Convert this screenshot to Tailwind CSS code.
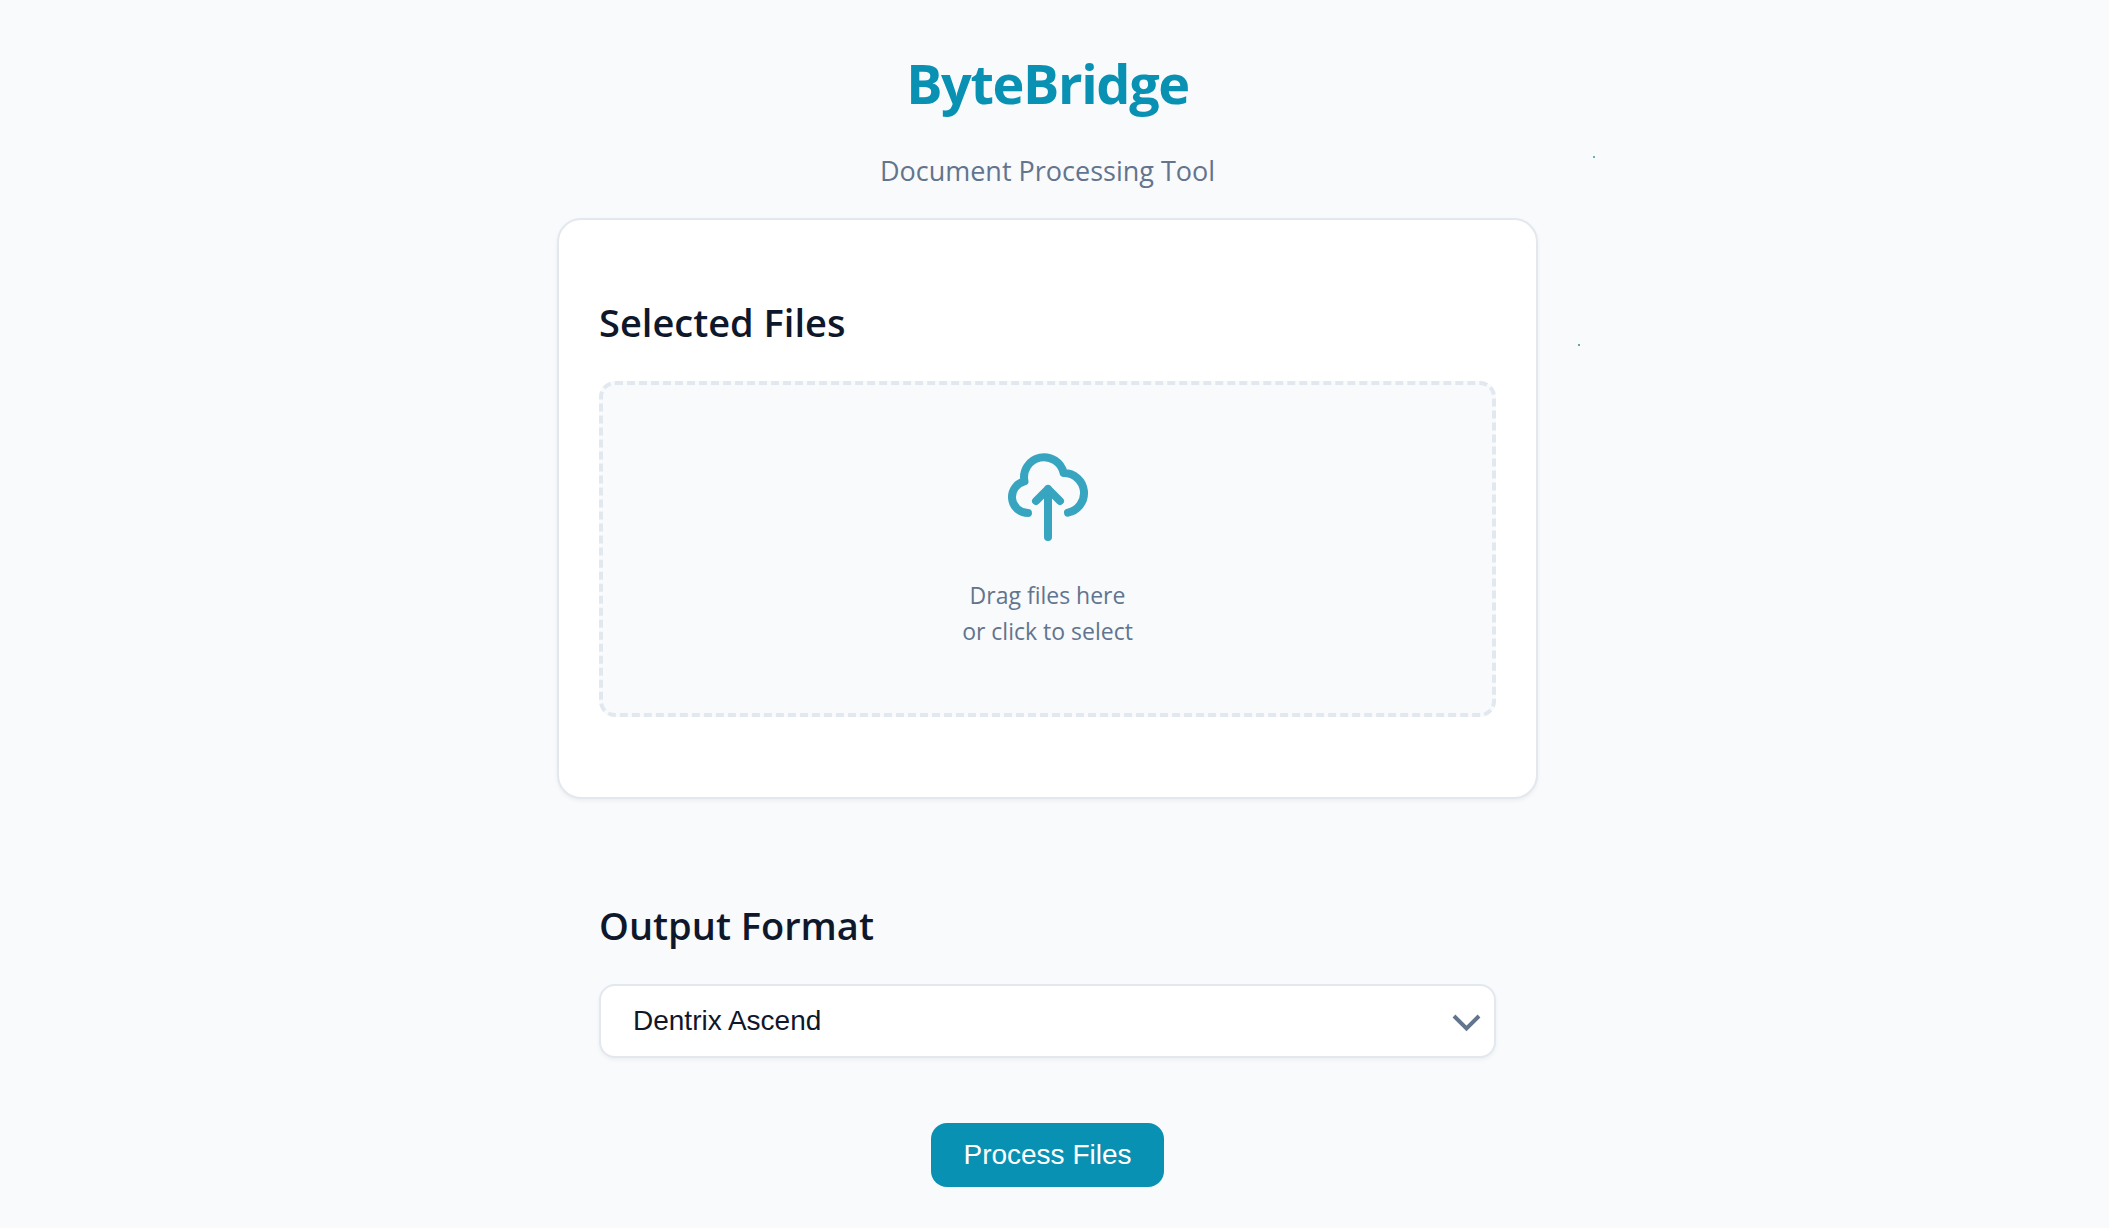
<!DOCTYPE html>
<html lang="en">
<head>
<meta charset="UTF-8">
<meta name="viewport" content="width=device-width, initial-scale=1">
<title>ByteBridge</title>
<script src="https://cdn.jsdelivr.net/npm/@tailwindcss/browser@4"></script>
</head>
<body class="relative min-h-screen bg-[#f9fafc] pt-[47px] pr-[14px] pb-10 font-['Open_Sans',sans-serif] text-slate-900">
  <main class="mx-auto flex w-full max-w-[981px] flex-col">
    <header class="text-center">
      <h1 class="text-[54px] leading-[72px] font-bold tracking-tight text-[#0891b2]">ByteBridge</h1>
      <p class="mt-8 text-[27px] leading-[40px] text-slate-500">Document Processing Tool</p>
    </header>

    <section class="mt-[27px] rounded-3xl border-2 border-[#e2e8ee] bg-white px-10 pt-[74px] pb-20 shadow-[0_2px_4px_rgba(0,0,0,0.05)]">
      <h2 class="text-[38px] leading-[56px] font-semibold">Selected Files</h2>
      <label class="mt-[31px] flex cursor-pointer flex-col items-center rounded-2xl border-4 border-dashed border-slate-200 bg-[#f9fafc] py-16">
        <input type="file" multiple class="sr-only">
        <svg class="size-24 text-[#0891b2] opacity-80" viewBox="0 0 24 24" fill="none" stroke="currentColor" stroke-width="2" stroke-linecap="round" stroke-linejoin="round" aria-hidden="true">
          <path d="M7 16a4 4 0 01-.88-7.903A5 5 0 1115.9 6L16 6a5 5 0 011 9.9M15 13l-3-3m0 0l-3 3m3-3v12"/>
        </svg>
        <span class="mt-8 text-center text-[23px] leading-[36px] text-slate-500">Drag files here<br>or click to select</span>
      </label>
    </section>

    <section class="mt-[98px] px-[42px]">
      <h2 class="text-[38px] leading-[56px] font-semibold"><label for="format">Output Format</label></h2>
      <div class="relative mt-[31px]">
        <select id="format" class="block h-[74px] w-full appearance-none rounded-2xl border-2 border-[#e2e8ee] bg-white px-8 font-['Liberation_Sans',sans-serif] text-[28px] text-slate-900 shadow-[0_2px_4px_rgba(0,0,0,0.05)]">
          <option>Dentrix Ascend</option>
        </select>
        <svg class="pointer-events-none absolute top-7 right-[13px] h-5 w-8 text-slate-500" viewBox="0 0 32 20" fill="none" stroke="currentColor" stroke-width="4" aria-hidden="true">
          <path d="M3 4L15.500 16.500L28 4"/>
        </svg>
      </div>
    </section>

    <button type="button" class="mx-auto mt-[65px] h-16 rounded-2xl bg-[#0891b2] px-8 font-['Liberation_Sans',sans-serif] text-[28px] text-white">Process Files</button>
  </main>
  <span class="absolute top-[156px] left-[1593px] size-[2px] bg-[#6bb0b2]"></span>
  <span class="absolute top-[344px] left-[1578px] size-[2px] bg-[#5fab9f]"></span>
</body>
</html>
